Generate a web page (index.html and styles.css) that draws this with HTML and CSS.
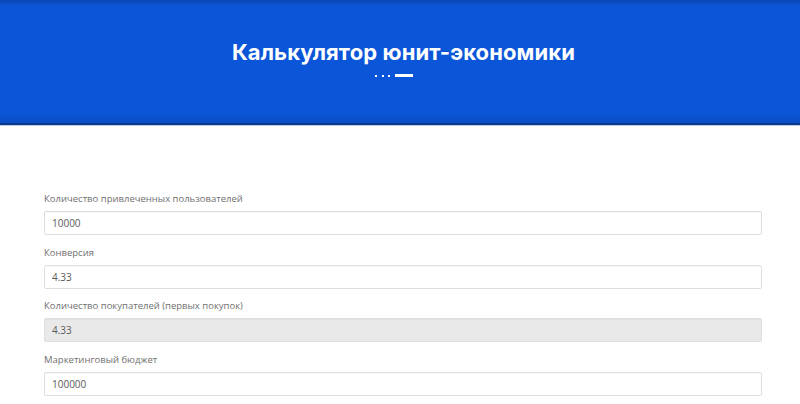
FILE: index.html
```html
<!DOCTYPE html>
<html lang="ru">
<head>
<meta charset="utf-8">
<link rel="stylesheet" href="styles.css">
</head>
<body>
<header class="hero">
  <h1 class="hero-title">Калькулятор юнит-экономики</h1>
  <div class="hero-mark"><span class="dot"></span><span class="dot"></span><span class="dot"></span><span class="dash"></span></div>
</header>
<main class="calc">
  <div class="field">
    <label class="field-label">Количество привлеченных пользователей</label>
    <input class="field-input" type="text" value="10000">
  </div>
  <div class="field">
    <label class="field-label">Конверсия</label>
    <input class="field-input" type="text" value="4.33">
  </div>
  <div class="field">
    <label class="field-label">Количество покупателей (первых покупок)</label>
    <input class="field-input is-readonly" type="text" value="4.33" readonly>
  </div>
  <div class="field">
    <label class="field-label">Маркетинговый бюджет</label>
    <input class="field-input" type="text" value="100000">
  </div>
</main>
</body>
</html>
```
FILE: styles.css
```css
html, body {
  margin: 0;
  padding: 0;
  background: #fff;
  font-family: "Open Sans", "Liberation Sans", sans-serif;
}
.hero {
  height: 125px;
  background: linear-gradient(to bottom, #0a45b2 0px, #0b55d8 6px, #0b55d8 112px, #0a4fc9 121px);
  border-bottom: 2px solid #0a3a8c;
  box-shadow: 0 1px 0 #b9c9e6;
  display: flex;
  flex-direction: column;
  align-items: center;
  padding-top: 38px;
  box-sizing: border-box;
}
.hero-title {
  margin: 0 0 0 7px;
  color: #fff;
  font-family: "Inter", "Liberation Sans", sans-serif;
  font-weight: 700;
  font-size: 22px;
  line-height: 28px;
  letter-spacing: 0.1px;
}
.hero-mark {
  display: flex;
  align-items: center;
  gap: 4.5px;
  margin-top: 8px;
  margin-right: 12px;
}
.dot {
  width: 2px;
  height: 2px;
  background: #fff;
}
.dash {
  width: 18px;
  height: 3px;
  background: #fff;
  margin-left: 0;
}
.calc {
  padding: 67px 38px 0 44px;
  display: flex;
  flex-direction: column;
  gap: 10.7px;
}
.field {
  display: flex;
  flex-direction: column;
}
.field-label {
  font-size: 9.5px;
  color: #6f6f6f;
  font-weight: 400;
  line-height: 13px;
  margin-bottom: 6px;
}
.field-input {
  height: 24px;
  box-sizing: border-box;
  border: 1px solid #dedede;
  border-radius: 2px;
  padding: 0 7px;
  font-family: "Open Sans", "Liberation Sans", sans-serif;
  font-size: 10px;
  color: #5a5a5a;
  background: #fff;
  outline: none;
  box-shadow: inset 0 1px 1px rgba(0,0,0,0.03);
}
.field-input.is-readonly {
  background: #e9e9ea;
}
```
